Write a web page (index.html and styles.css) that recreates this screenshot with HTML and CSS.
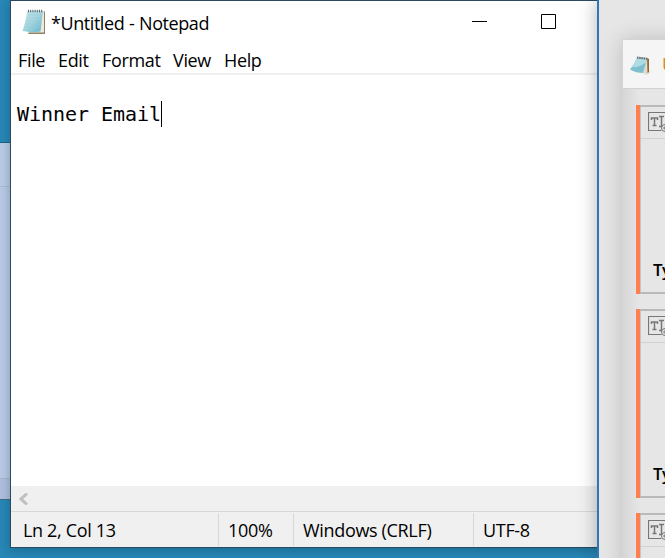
FILE: index.html
```
<!DOCTYPE html>
<html lang="en">
<head>
<meta charset="utf-8">
<title>Notepad</title>
<link rel="stylesheet" href="styles.css">
</head>
<body>
<div class="back-window"></div>
<main class="notepad">
  <header class="titlebar">
    <svg class="app-icon" width="24" height="26" viewBox="0 0 24 26">
      <defs><linearGradient id="paper" x2="1" y2="1"><stop stop-color="#c9e7eb"/><stop offset=".5" stop-color="#a4d5df"/><stop offset="1" stop-color="#62b5c8"/></linearGradient></defs>
      <path d="M20.5 2.5H23V25H6l1-2h12z" fill="#8d8168"/>
      <path d="M20 2.5h2V23.5H5z" fill="#eee9dc"/>
      <path d="M5.500 2H21L18.500 22.500Q9 24 .5 22 3 15 5.500 2z" fill="url(#paper)"/>
      <path d="M5 6h14M4.500 9h14M4 12h14M3 15h14M2.500 18h14" stroke="#8fc7d3" stroke-width=".4"/>
      <path d="M6 2h15" stroke="#53656b" stroke-width="2.500" stroke-dasharray="1 1.200"/>
    </svg>
    <span class="title">*Untitled - Notepad</span>
    <svg class="controls" width="86" height="16" viewBox="0 0 86 16" fill="none" stroke="#000"><path d="M0 7.500h15M69.500.5h14v14h-14z"/></svg>
  </header>
  <nav class="menu"><span class="file">File</span><span class="edit">Edit</span><span class="format">Format</span><span class="view">View</span><span class="help">Help</span></nav>
  <section class="editor"><span>Winner Email</span><i class="caret"></i></section>
  <div class="scrollbar"><svg width="10" height="12" viewBox="0 0 10 12"><path d="M8 .5 2 6l6 5.500" fill="none" stroke="#bfbfbf" stroke-width="3"/></svg></div>
  <footer class="status"><span class="position">Ln 2, Col 13</span><span class="percent">100%</span><span class="ending">Windows (CRLF)</span><span class="encoding">UTF-8</span></footer>
</main>
<aside class="side-app">
  <div class="panel">
    <div class="panel-title">
      <svg width="20" height="20" viewBox="0 0 20 20">
        <path d="M16 2l4 15-4 2-3-2z" fill="#dedbd0"/><path d="M17 2l2 1v13l-1.500 1z" fill="#98672e"/>
        <path d="M7 2l10 1-4 14Q6 17 0 13.500 4 9 7 2z" fill="#7dbfce"/><path d="M7 2l10 1-1.500 4Q8 12 2 11z" fill="#b0dbe3"/><path d="M7 1.500l10 1.200" stroke="#596b6d" stroke-width="2" stroke-dasharray="1.500 .7"/>
      </svg><span class="panel-name">U</span>
    </div>
    <div class="cards">
      <article class="card"><div class="card-head"><svg width="24" height="22" viewBox="0 0 24 22"><use href="#type-icon"/></svg></div><b>Type</b></article>
      <article class="card"><div class="card-head"><svg width="24" height="22" viewBox="0 0 24 22"><use href="#type-icon"/></svg></div><b>Type</b></article>
      <article class="card"><div class="card-head"><svg width="24" height="22" viewBox="0 0 24 22"><use href="#type-icon"/></svg></div><b>Type</b></article>
    </div>
  </div>
</aside>
<svg class="symbols" width="0" height="0"><defs><g id="type-icon" fill="none" stroke="#77777a"><path d="M13.500 18.500H.5V.5H24" stroke-width="1.200"/><path d="M3.500 8V6h6v2M6.500 6v7.500M4.500 13.500h4" stroke-width="1.500"/><path d="M11 4.500h5M13.500 4.500v10M11 14.500h3" stroke-width="1.500"/><circle cx="17" cy="16" r="3.500"/><path d="M15 16h4M17 14v4"/></g></defs></svg>
</body>
</html>
```
FILE: styles.css
```
* { box-sizing: border-box; }
body {
  position: relative;
  width: 665px;
  height: 558px;
  margin: 0;
  overflow: hidden;
  background: #2787b6;
  font: 18px/24px "Open Sans", "Noto Sans", sans-serif;
  color: #000;
}
.back-window {
  position: absolute;
  left: 0;
  top: 142px;
  width: 12px;
  height: 358px;
  border-top: 1px solid #1c6185;
  border-bottom: 1px solid #3f6a89;
  background: linear-gradient(#b9cbe6 0 43px, #a9bbd6 43px 44px, #b9c9e6 44px 335px, #a5b6d0 335px 336px, #afbfdd 336px);
}
.notepad {
  position: absolute;
  left: 10px;
  top: 0;
  display: flex;
  flex-direction: column;
  width: 588px;
  height: 548px;
  border: 1px solid #294b60;
  background: #fff;
  box-shadow: 0 2px 10px rgba(0, 25, 40, .28);
}
.titlebar {
  display: flex;
  height: 45px;
  padding: 8px 0 0 11px;
}
.app-icon { margin-right: 4px; }
.title {
  width: 161px;
  margin-top: 2px;
  margin-left: 1px;
  letter-spacing: -.43px;
  word-spacing: .5px;
  white-space: nowrap;
}
.controls { margin: 5px 0 0 260px; }
.menu {
  display: flex;
  height: 29px;
  padding: 2px 0 0 7px;
  border-bottom: 2px solid #f0f0f0;
  letter-spacing: -.35px;
}
.file { width: 40px; }
.edit { width: 44px; }
.format { width: 71px; }
.view { width: 51px; }
.editor {
  display: flex;
  flex: 1;
  padding: 26px 0 0 6px;
  font: 20px/27px "DejaVu Sans Mono", monospace;
  letter-spacing: -.04px;
}
.caret {
  width: 1px;
  height: 26px;
  background: #000;
}
.scrollbar {
  height: 25px;
  padding: 7px 0 0 8px;
  background: #f0f0f0;
}
.scrollbar svg { display: block; }
.status {
  display: flex;
  height: 36px;
  border-top: 1px solid #d7d7d7;
  background: #f0f0f0;
  line-height: 35px;
  letter-spacing: -.33px;
  white-space: nowrap;
}
.status span { margin: 1px 0; padding-left: 9px; border-right: 1px solid #d7d7d7; }
.status .position { width: 208px; padding-left: 12px; }
.percent { width: 75px; }
.ending { width: 180px; }
.status .encoding { border: 0; }
.side-app {
  position: absolute;
  left: 597px;
  top: 0;
  width: 68px;
  height: 558px;
  padding: 39px 0 0 23px;
  overflow: hidden;
  border-left: 2px solid #2e76b9;
  background: #e6e6e6;
  box-shadow: 0 0 18px rgba(0, 0, 0, .3);
}
.panel {
  width: 350px;
  height: 650px;
  border: 1px solid #d4d4d4;
  background: linear-gradient(90deg, #d6d6d6, #e6e6e6 17px);
  box-shadow: 0 0 20px rgba(0, 0, 0, .18);
}
.panel-title {
  display: flex;
  height: 49px;
  padding: 16px 0 0 7px;
  border-bottom: 1px solid #d2d2d2;
  background: #f5f5f5;
}
.panel-title svg { margin-right: 12px; }
.panel-name { margin-top: -4px; color: #d4851c; }
.cards {
  display: flex;
  flex-direction: column;
  gap: 15px;
  padding: 16px 0 0 13px;
}
.card {
  height: 189px;
  border: 2px solid #b9b9b9;
  border-left: 0;
  background: #e6e6e6;
  box-shadow: inset 4px 0 #ff7f50, inset 5px 0 #c4c4c4;
  position: relative;
}
.card::before {
  content: "";
  position: absolute;
  left: 0;
  top: -2px;
  width: 4px;
  height: 189px;
  background: #ff7f50;
}
.card-head {
  height: 32px;
  margin-left: 5px;
  padding: 5px 0 0 7px;
  border-bottom: 1px solid #d1d1d1;
}
.card-head svg { display: block; }
.card b {
  display: block;
  margin: 119px 0 0 17px;
  font-size: 17px;
  line-height: 24px;
  font-weight: 600;
  letter-spacing: -.5px;
}
.symbols { position: absolute; }
```
